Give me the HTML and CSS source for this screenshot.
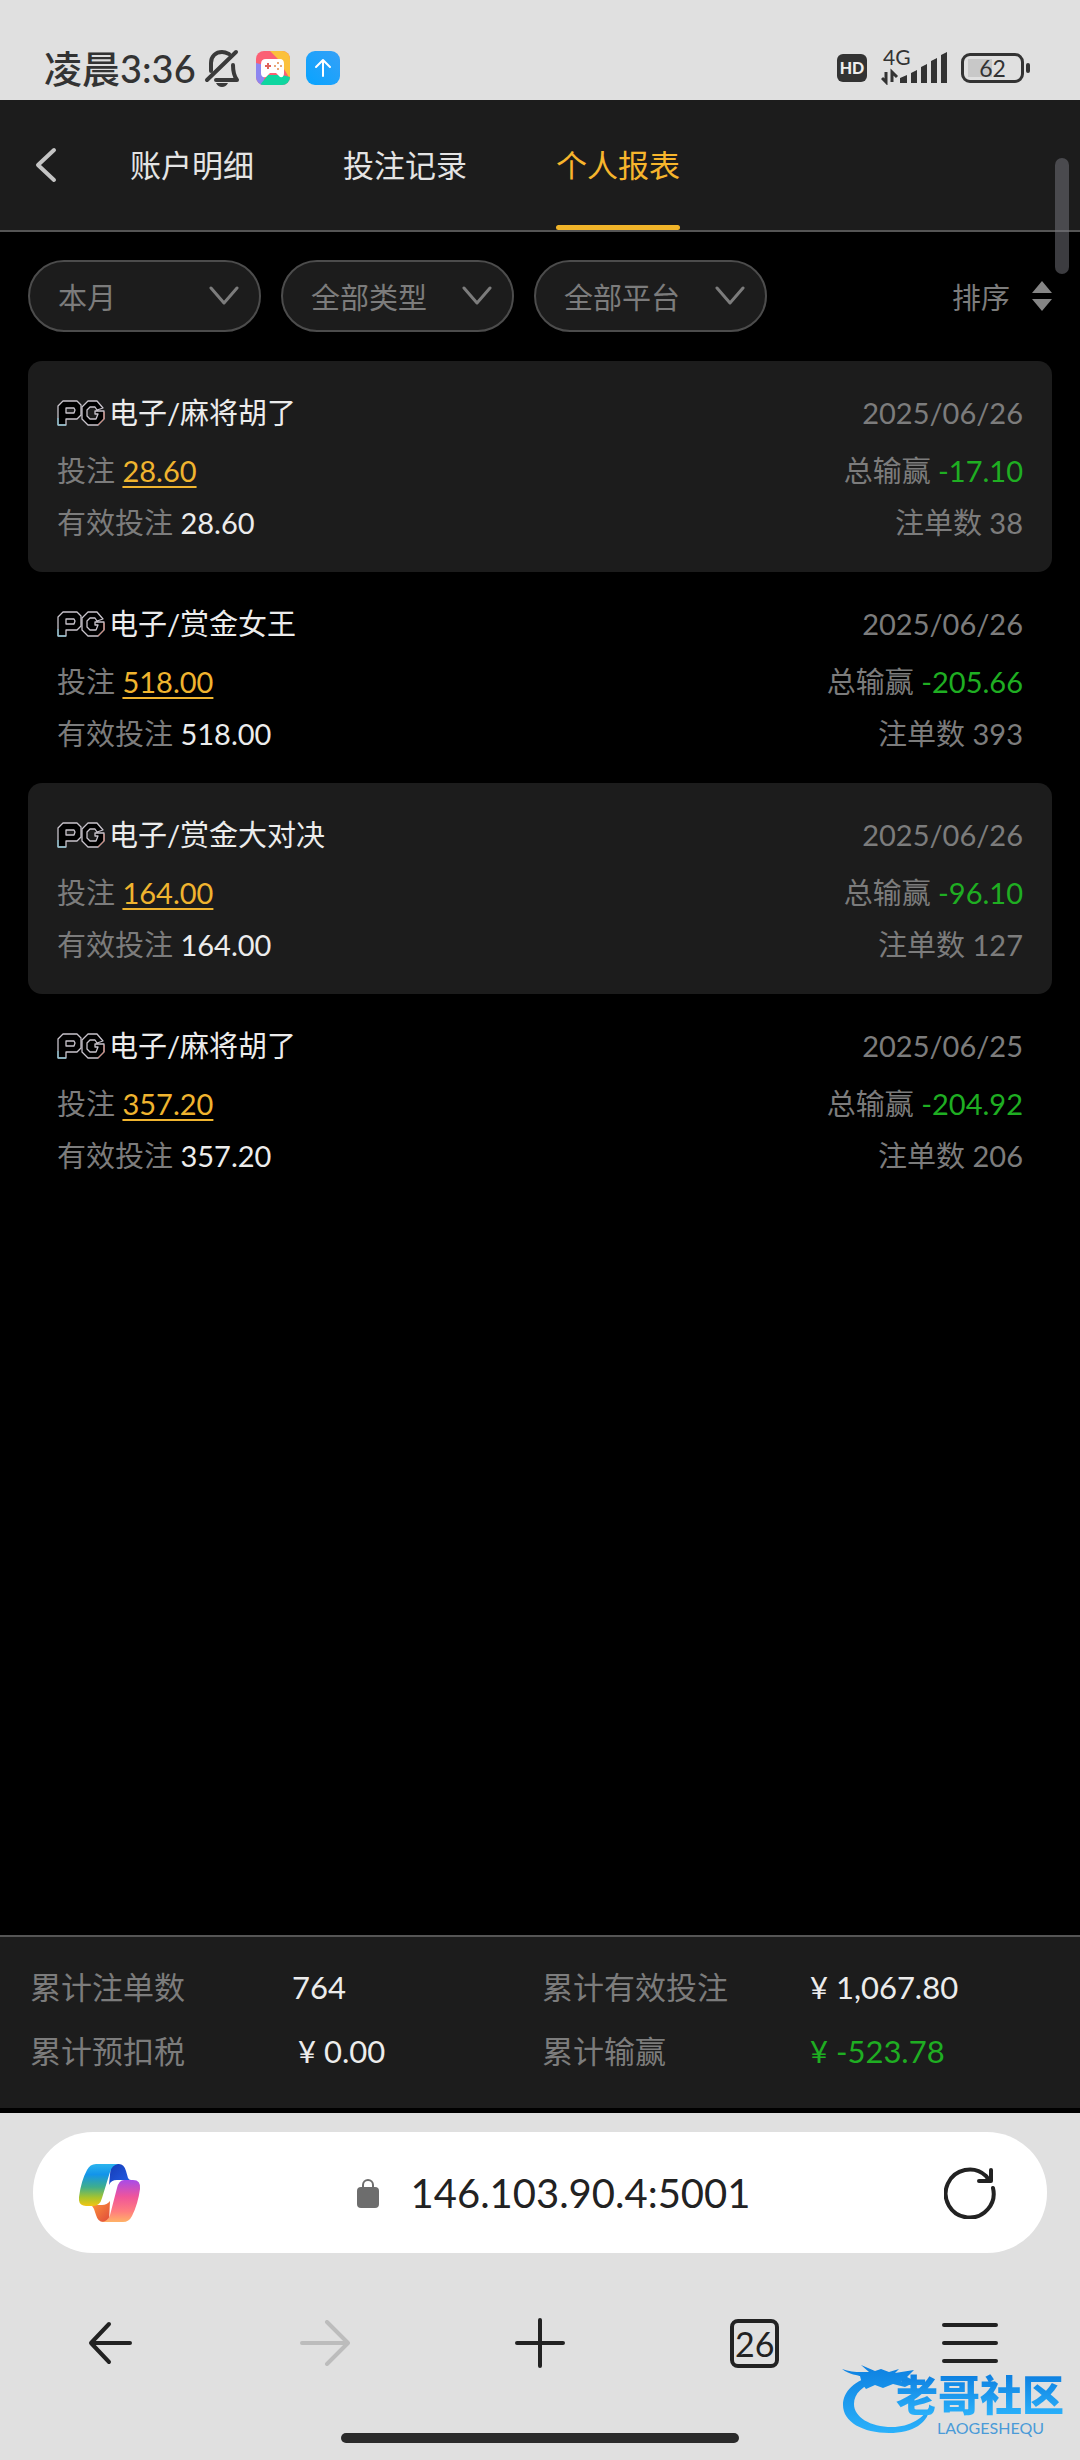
FILE: index.html
```html
<!DOCTYPE html>
<html lang="zh-CN">
<head>
<meta charset="utf-8">
<meta name="viewport" content="width=device-width, initial-scale=1">
<title>个人报表</title>
<link rel="stylesheet" href="styles.css">
</head>
<body>
<svg class="defs" aria-hidden="true">
  <symbol id="pg" viewBox="0 0 48 26">
    <g fill="#000" stroke="#c9c4cc" stroke-width="1.3" stroke-linejoin="round" fill-rule="evenodd">
      <path d="M1 25V6l5-5h14l4 4v10l-4 4H9v6zM9 8h8l1 2-1 3H9z"/>
      <path d="M46 8l-6-7h-9l-6 6v12l6 6h10l6-6v-8h-9v3h3l-2 5h-6l-3-3v-6l3-3h5l2 3z"/>
    </g>
    <path d="M1 18v7h8" fill="none" stroke="#7fc6d8"/>
    <path d="M47 12v7l-6 6" fill="none" stroke="#d98b7c"/>
  </symbol>
  <symbol id="chev" viewBox="0 0 30 20"><path d="M2 2l13 15L28 2" fill="none" stroke="currentColor" stroke-width="3" stroke-linecap="round" stroke-linejoin="round"/></symbol>
</svg>

<div class="status">
  <div class="status-left">
    <span class="clock">凌晨3:36</span>
    <svg class="bell" width="36" height="38" viewBox="0 0 36 38"><g fill="none" stroke="#3a3a3a" stroke-width="4" stroke-linecap="round" stroke-linejoin="round"><path d="M32 3L3 31"/><path d="M7 22V14C7 7 12 3 18 3c3 0 5 1 7 2"/><path d="M12 31h21c-3-4-4-7-4-15"/></g><path d="M12 34h12q-2 4-6 4t-6-4z" fill="#3a3a3a"/></svg>
    <svg width="34" height="34" viewBox="0 0 34 34"><defs><clipPath id="gc"><rect width="34" height="34" rx="8"/></clipPath></defs><g clip-path="url(#gc)"><path fill="#fb6074" d="M0 0h34v34H0z"/><path fill="#fbc13c" d="M14 0h20v28L22 8z"/><path fill="#8d86f0" d="M0 12l8 2v20H0z"/><path fill="#0fd6a0" d="M4 34l8-10h14l8 2v8z"/></g><path fill="#fff" d="M10 8h14q4 0 4 5v9q0 5-4 4l-4-4h-6l-4 4q-5 1-5-4v-9q0-5 5-5z"/><path d="M12 12v6M9 15h6" stroke="#e0635a" stroke-width="2"/><g fill="#e08a4a"><circle cx="22" cy="12" r="1"/><circle cx="22" cy="18" r="1"/><circle cx="19" cy="15" r="1"/><circle cx="25" cy="15" r="1"/></g></svg>
    <svg width="34" height="34" viewBox="0 0 34 34"><defs><linearGradient id="up" x1="1" y1="0" x2="0" y2="1"><stop stop-color="#35a0f7"/><stop offset="1" stop-color="#08a4ff"/></linearGradient></defs><rect width="34" height="34" rx="9" fill="url(#up)"/><path d="M17 25V9M10 16l7-7 7 7" fill="none" stroke="#fff" stroke-width="2" stroke-linecap="round" stroke-linejoin="round"/></svg>
  </div>
  <div class="status-right">
    <span class="hd">HD</span>
    <div class="signal">
      <span class="net">4G</span>
      <svg width="66" height="34" viewBox="0 0 66 34"><g fill="#333"><path d="M19 32v-5l7-3v8zM30 32V22l6-3v13zM40 32V16l6-3v19zM50 32V10l6-3v25zM60 32V4l6-3v31z"/></g><path d="M5 21v10L1 27M11 31V21l5 5" fill="none" stroke="#333" stroke-width="3"/></svg>
    </div>
    <div class="battery"><span>62</span></div>
  </div>
</div>

<main class="app">
  <header class="tabs">
    <button class="back" aria-label="返回"><svg width="22" height="36" viewBox="0 0 22 36"><path d="M19 3L3 18l16 15" fill="none" stroke="#c4c4c4" stroke-width="4" stroke-linecap="round" stroke-linejoin="round"/></svg></button>
    <nav>
      <a href="#">账户明细</a>
      <a href="#">投注记录</a>
      <a href="#" class="active">个人报表</a>
    </nav>
    <div class="scrollbar"></div>
  </header>

  <div class="filters">
    <button class="chip">本月<svg width="30" height="20"><use href="#chev"/></svg></button>
    <button class="chip">全部类型<svg width="30" height="20"><use href="#chev"/></svg></button>
    <button class="chip">全部平台<svg width="30" height="20"><use href="#chev"/></svg></button>
    <button class="sort">排序<svg width="20" height="30" viewBox="0 0 20 30"><path d="M10 0l10 12H0zM10 30l10-12H0z" fill="#858585"/></svg></button>
  </div>

  <section class="list">
    <article class="card">
      <div class="row head"><h2><svg width="48" height="26"><use href="#pg"/></svg>电子/麻将胡了</h2><span>2025/06/26</span></div>
      <div class="row"><span>投注 <a href="#">28.60</a></span><span>总输赢 <b class="neg">-17.10</b></span></div>
      <div class="row"><span>有效投注 <b>28.60</b></span><span>注单数 38</span></div>
    </article>
    <article class="card">
      <div class="row head"><h2><svg width="48" height="26"><use href="#pg"/></svg>电子/赏金女王</h2><span>2025/06/26</span></div>
      <div class="row"><span>投注 <a href="#">518.00</a></span><span>总输赢 <b class="neg">-205.66</b></span></div>
      <div class="row"><span>有效投注 <b>518.00</b></span><span>注单数 393</span></div>
    </article>
    <article class="card">
      <div class="row head"><h2><svg width="48" height="26"><use href="#pg"/></svg>电子/赏金大对决</h2><span>2025/06/26</span></div>
      <div class="row"><span>投注 <a href="#">164.00</a></span><span>总输赢 <b class="neg">-96.10</b></span></div>
      <div class="row"><span>有效投注 <b>164.00</b></span><span>注单数 127</span></div>
    </article>
    <article class="card">
      <div class="row head"><h2><svg width="48" height="26"><use href="#pg"/></svg>电子/麻将胡了</h2><span>2025/06/25</span></div>
      <div class="row"><span>投注 <a href="#">357.20</a></span><span>总输赢 <b class="neg">-204.92</b></span></div>
      <div class="row"><span>有效投注 <b>357.20</b></span><span>注单数 206</span></div>
    </article>
  </section>

  <dl class="totals">
    <dt>累计注单数</dt><dd>764</dd>
    <dt>累计有效投注</dt><dd>¥ 1,067.80</dd>
    <dt>累计预扣税</dt><dd class="inset">¥ 0.00</dd>
    <dt>累计输赢</dt><dd class="neg">¥ -523.78</dd>
  </dl>
</main>

<footer class="browser">
  <div class="address">
    <button aria-label="Copilot"><svg width="62" height="58" viewBox="0 0 62 58"><defs>
      <linearGradient id="c1" x1="0" y1="0" x2="0" y2="1"><stop stop-color="#2bb4ee"/><stop offset=".25" stop-color="#1394ea"/><stop offset=".55" stop-color="#3fae8c"/><stop offset=".8" stop-color="#a9c42c"/><stop offset="1" stop-color="#f2c514"/></linearGradient>
      <linearGradient id="c2" x1="0" y1="0" x2="0" y2="1"><stop stop-color="#a84be8"/><stop offset=".4" stop-color="#f0559a"/><stop offset=".75" stop-color="#ff7d7e"/><stop offset="1" stop-color="#ffb266"/></linearGradient>
      <linearGradient id="c3" x1="0" y1="0" x2="1" y2="1"><stop stop-color="#153bb5"/><stop offset="1" stop-color="#2560e8"/></linearGradient>
      <linearGradient id="c4" x1="0" y1="0" x2="1" y2="1"><stop stop-color="#ff9a3c"/><stop offset="1" stop-color="#e04a3a"/></linearGradient></defs>
      <path fill="url(#c3)" d="M32 0h8q5 0 7 7l2 7q1 2 3 2H38q-6 0-8 5z"/>
      <path fill="url(#c4)" d="M30 58h-6q-5 0-7-7l-2-6q-1-3-4-4h12q5 0 8-4z"/>
      <path fill="url(#c1)" d="M17 0h22q-6 1-8 8l-8 26q-2 8-9 8H7q-8 0-7-9 2-16 8-27 3-6 9-6z"/>
      <path fill="url(#c2)" d="M45 16h9q8 0 7 9-2 15-8 27-3 6-9 6H23q6-1 8-7l7-27q2-8 7-8z"/></svg></button>
    <div class="url"><svg width="22" height="30" viewBox="0 0 22 30"><rect y="9" width="22" height="21" rx="4" fill="#6d6d6d"/><path d="M6 11V7a5 5 0 0110 0v4" fill="none" stroke="#6d6d6d" stroke-width="2"/></svg><span>146.103.90.4:5001</span></div>
    <button aria-label="刷新"><svg width="52" height="52" viewBox="0 0 52 52"><path d="M49 21a24 24 0 11-7-12l3 4M47 3v11H35" fill="none" stroke="#222" stroke-width="4" stroke-linecap="round" stroke-linejoin="round"/></svg></button>
  </div>
  <div class="toolbar">
    <button aria-label="后退"><svg width="44" height="44" viewBox="0 0 44 44"><path d="M42 22H3M21 3L3 22l18 19" fill="none" stroke="#222" stroke-width="4" stroke-linecap="round" stroke-linejoin="round"/></svg></button>
    <button aria-label="前进" disabled><svg width="50" height="46" viewBox="0 0 50 46"><path d="M2 23h45M27 2l21 21-21 21" fill="none" stroke="#bcbcbc" stroke-width="4" stroke-linecap="round" stroke-linejoin="round"/></svg></button>
    <button aria-label="新标签页"><svg width="50" height="50" viewBox="0 0 50 50"><path d="M25 2v46M2 25h46" stroke="#222" stroke-width="4" stroke-linecap="round"/></svg></button>
    <button class="count" aria-label="标签页"><span>26</span></button>
    <button aria-label="菜单"><svg width="56" height="44" viewBox="0 0 56 44"><path d="M2 4h52M2 22h52M2 40h52" stroke="#222" stroke-width="4" stroke-linecap="round"/></svg></button>
  </div>
  <div class="home"></div>
  <div class="mark">
    <svg viewBox="0 0 96 74" width="96" height="74"><defs><linearGradient id="dg" gradientUnits="userSpaceOnUse" x1="0" y1="0" x2="0" y2="70"><stop stop-color="#0d7fe0"/><stop offset="1" stop-color="#2bb2fb"/></linearGradient></defs><g fill="url(#dg)"><path d="M34 11C12 16 1 28 1 41c0 17 20 28 46 28 24 0 40-10 41-27-6 12-20 21-38 21-22 0-38-10-38-23 0-10 8-19 26-24z"/><path d="M0 5c10 4 20 3 27 3l-8-7 14 6 6-2 8 3 10-3-4 4 19-3-7 7 6 3-12 1 8 4-4 2-12-3-10 4-8-3-9 4-4-5-2-8C18 12 6 10 0 5z"/></g></svg>
    <strong>老哥社区</strong><small>LAOGESHEQU</small>
  </div>
</footer>
</body>
</html>
```
FILE: styles.css
```css
* { box-sizing: border-box; }
body {
  margin: 0;
  min-height: 100vh;
  display: flex;
  flex-direction: column;
  background: #e0e0e0;
  font-family: Lato, "Noto Sans CJK SC", sans-serif;
  font-size: 29px;
  color: #7c7c7c;
}
button {
  border: 0;
  padding: 0;
  background: none;
  font: inherit;
  color: inherit;
  display: flex;
  align-items: center;
  justify-content: center;
}
a { color: inherit; text-decoration: none; }
svg { display: block; flex: none; }
.defs { position: absolute; width: 0; height: 0; }

.status {
  height: 100px;
  padding: 51px 56px 0 44px;
  display: flex;
  justify-content: space-between;
  align-items: flex-start;
  color: #333;
}
.status-left, .status-right { display: flex; align-items: center; height: 34px; }
.status-left { gap: 16px; }
.clock { font-size: 38px; font-weight: 500; line-height: 34px; }
.bell { margin-left: -8px; }
.status-right { gap: 14px; }
.hd {
  width: 30px;
  height: 28px;
  border-radius: 6px;
  background: #333;
  color: #eee;
  font-size: 16px;
  font-weight: 900;
  line-height: 28px;
  text-align: center;
}
.signal { position: relative; }
.net { position: absolute; left: 2px; top: -4px; font-size: 21px; line-height: 20px; }
.battery {
  position: relative;
  width: 63px;
  height: 30px;
  border: 3px solid #333;
  border-radius: 9px;
  background: linear-gradient(#c8c8c8, #c8c8c8) 4px 3px / 24px 18px no-repeat;
  font-size: 23px;
  line-height: 24px;
  text-align: center;
}
.battery::after {
  content: "";
  position: absolute;
  right: -9px;
  top: 7px;
  width: 4px;
  height: 10px;
  border-radius: 2px;
  background: #333;
}

.app {
  flex: 1;
  display: flex;
  flex-direction: column;
  background: #000;
  padding-bottom: 5px;
}
.tabs {
  position: relative;
  height: 132px;
  display: flex;
  background: #1c1c1c;
  border-bottom: 2px solid #555;
}
.back { width: 92px; }
.tabs nav { display: flex; gap: 89px; margin-left: 38px; }
.tabs nav a {
  position: relative;
  display: flex;
  align-items: center;
  font-size: 31px;
  color: #e4e4e4;
}
.tabs nav .active { color: #f7b52c; }
.tabs nav .active::after {
  content: "";
  position: absolute;
  left: 0;
  right: 0;
  bottom: 0;
  height: 5px;
  border-radius: 3px;
  background: #f0b429;
}
.tabs nav a { padding-bottom: 4px; }
.scrollbar {
  position: absolute;
  right: 11px;
  top: 58px;
  width: 14px;
  height: 116px;
  border-radius: 7px;
  background: rgba(120, 120, 128, .5);
}
.filters {
  display: flex;
  gap: 20px;
  padding: 28px 28px 29px;
}
.chip {
  width: 233px;
  height: 72px;
  padding: 0 20px 0 28px;
  justify-content: space-between;
  border: 2px solid #4c4c4c;
  border-radius: 36px;
  background: #1c1c1c;
}
.sort { margin-left: auto; gap: 22px; }

.list { padding: 0 28px; }
.card { padding: 26px 29px 23px; border-radius: 14px; }
.card:nth-child(odd) { background: #1c1c1c; }
.row {
  display: flex;
  justify-content: space-between;
  line-height: 52px;
}
.row.head { margin-bottom: 6px; }
.row h2 {
  margin: 0;
  display: flex;
  align-items: center;
  gap: 4px;
  font-size: 29px;
  font-weight: 400;
  color: #ececec;
}
.row b { font-weight: 400; color: #ececec; }
.row a { color: #f0b42f; text-decoration: underline; text-decoration-thickness: 2px; text-underline-offset: 4px; }
.row .neg, .totals .neg { color: #1fae22; }

.totals {
  margin: auto 0 0;
  padding: 18px 30px 25px;
  display: grid;
  grid-template-columns: 262fr 250fr 268fr 240fr;
  line-height: 64px;
  font-size: 31px;
  background: #1c1c1c;
  border-top: 2px solid #555;
}
.totals dd { margin: 0; color: #ececec; }
.totals .inset { padding-left: 6px; }

.browser { position: relative; }
.address {
  margin: 19px 33px 0;
  height: 121px;
  padding: 0 51px 0 46px;
  display: flex;
  align-items: center;
  justify-content: space-between;
  border-radius: 60px;
  background: #fff;
}
.url { display: flex; align-items: center; gap: 32px; margin-left: 22px; font-size: 40px; color: #222; }
.toolbar {
  height: 180px;
  padding: 0 3px;
  display: grid;
  grid-template-columns: repeat(5, 1fr);
}
.count span {
  width: 49px;
  height: 49px;
  border: 4px solid #222;
  border-radius: 8px;
  color: #222;
  font-size: 34px;
  line-height: 41px;
}
.home { width: 398px; height: 10px; margin: 0 auto 17px; border-radius: 5px; background: #2b2b2b; }
.mark {
  position: absolute;
  right: 12px;
  bottom: 22px;
  width: 226px;
  height: 74px;
}
.mark strong, .mark small { position: absolute; white-space: nowrap; }
.mark strong {
  right: 4px;
  top: 10px;
  font-size: 42px;
  font-weight: 900;
  line-height: 42px;
  background: linear-gradient(#0d7fe0, #2bb2fb);
  background-clip: text;
  color: transparent;
}
.mark small { right: 24px; top: 56px; font-size: 16px; line-height: 16px; color: #4a9bd8; }
```
